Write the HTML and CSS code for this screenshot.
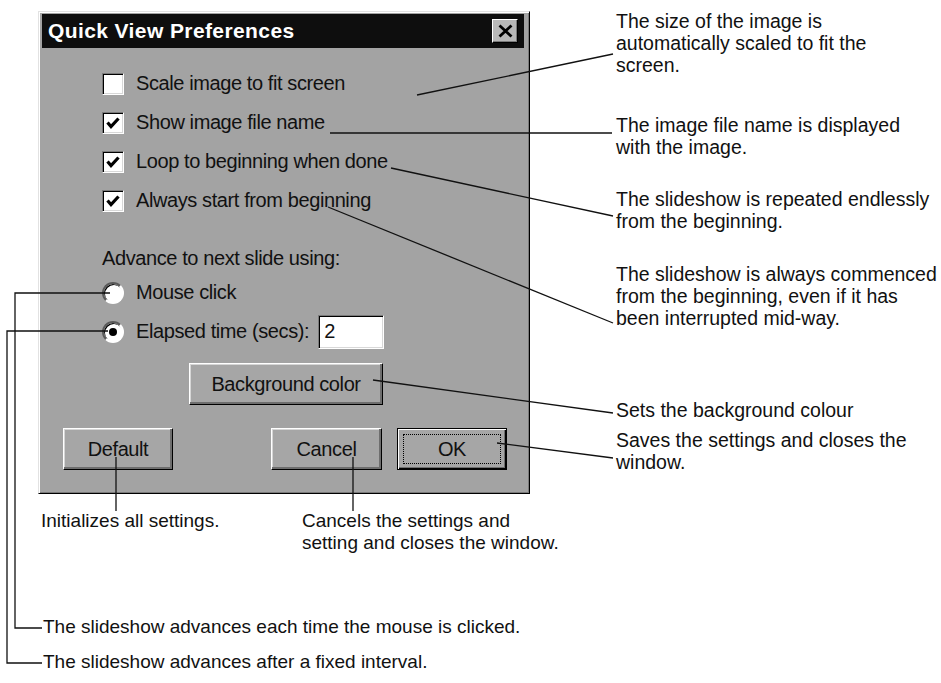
FILE: index.html
```html
<!DOCTYPE html>
<html>
<head>
<meta charset="utf-8">
<title>Quick View Preferences</title>
<link rel="stylesheet" href="styles.css">
</head>
<body>
<div class="page">
  <div class="dialog">
    <div class="titlebar">
      <span class="title">Quick View Preferences</span>
      <span class="close"><svg width="17" height="14" viewBox="0 0 17 14"><path d="M2.5 1.5 L14.5 12.5 M14.5 1.5 L2.5 12.5" stroke="#000" stroke-width="2.8" fill="none"/></svg></span>
    </div>
    <div class="body">
      <div class="options">
        <div class="opt"><span class="check"></span><span>Scale image to fit screen</span></div>
        <div class="opt"><span class="check"><svg width="16" height="16" viewBox="0 0 16 16"><path d="M2.5 7.5 L6 11.5 L13.5 3.5" stroke="#000" stroke-width="3.2" fill="none"/></svg></span><span>Show image file name</span></div>
        <div class="opt"><span class="check"><svg width="16" height="16" viewBox="0 0 16 16"><path d="M2.5 7.5 L6 11.5 L13.5 3.5" stroke="#000" stroke-width="3.2" fill="none"/></svg></span><span>Loop to beginning when done</span></div>
        <div class="opt"><span class="check"><svg width="16" height="16" viewBox="0 0 16 16"><path d="M2.5 7.5 L6 11.5 L13.5 3.5" stroke="#000" stroke-width="3.2" fill="none"/></svg></span><span>Always start from beginning</span></div>
      </div>
      <div class="group-label">Advance to next slide using:</div>
      <div class="radios">
        <div class="opt"><span class="radio"></span><span>Mouse click</span></div>
        <div class="opt"><span class="radio on"></span><span>Elapsed time (secs):</span><span class="field">2</span></div>
      </div>
      <div class="bg-row"><span class="btn bg">Background color</span></div>
      <div class="btn-row">
        <span class="btn default">Default</span>
        <span class="btn cancel">Cancel</span>
        <span class="btn ok"><span class="focus">OK</span></span>
      </div>
    </div>
  </div>

  <div class="note n-size">The size of the image is<br>automatically scaled to fit the<br>screen.</div>
  <div class="note n-name">The image file name is displayed<br>with the image.</div>
  <div class="note n-loop">The slideshow is repeated endlessly<br>from the beginning.</div>
  <div class="note n-always">The slideshow is always commenced<br>from the beginning, even if it has<br>been interrupted mid-way.</div>
  <div class="note n-bg">Sets the background colour</div>
  <div class="note n-ok">Saves the settings and closes the<br>window.</div>
  <div class="note small n-default">Initializes all settings.</div>
  <div class="note small n-cancel">Cancels the settings and<br>setting and closes the window.</div>
  <div class="note small n-mouse">The slideshow advances each time the mouse is clicked.</div>
  <div class="note small n-elapsed">The slideshow advances after a fixed interval.</div>

  <svg class="leaders" width="941" height="683" viewBox="0 0 941 683">
    <g stroke="#111" stroke-width="1.3" fill="none">
      <path d="M417 95 L613 54"/>
      <path d="M330 133 L612 133"/>
      <path d="M391 168 L613 216"/>
      <path d="M328 207 L613 323"/>
      <path d="M373 380 L613 413"/>
      <path d="M497 443 L613 458"/>
      <path d="M116 457 L116 511"/>
      <path d="M353 457 L353 511"/>
      <path d="M110 293 H15 V628 H42"/>
      <path d="M108 331 H7 V663 H42"/>
    </g>
  </svg>
</div>
</body>
</html>
```
FILE: styles.css
```css
html, body {
  margin: 0;
  padding: 0;
  background: #fff;
}

.page {
  position: relative;
  width: 941px;
  height: 683px;
  overflow: hidden;
  font-family: "Liberation Sans", Arial, sans-serif;
}

/* ---------- dialog ---------- */
.dialog {
  margin: 11px 0 0 38px;
  width: 492px;
  height: 483px;
  box-sizing: border-box;
  display: flex;
  flex-direction: column;
  background: #a3a3a3;
  border: 1px solid;
  border-color: #e2e2e2 #000 #000 #e2e2e2;
  box-shadow: inset 1px 1px #fff, inset -1px -1px #7a7a7a;
  padding: 2px 5px 4px 3px;
}

.titlebar {
  height: 34px;
  flex: none;
  background: #0e0e0e;
  display: flex;
  align-items: center;
  justify-content: space-between;
  padding: 0 6px 0 6px;
}

.title {
  color: #fff;
  font-weight: bold;
  font-size: 21px;
  letter-spacing: 0.4px;
}

.close {
  width: 26px;
  height: 24px;
  box-sizing: border-box;
  background: #b8b8b8;
  border: 1px solid;
  border-color: #fff #000 #000 #fff;
  box-shadow: inset -1px -1px #7a7a7a;
  display: flex;
  align-items: center;
  justify-content: center;
}

.body {
  flex: 1;
  display: flex;
  flex-direction: column;
  font-size: 20px;
  letter-spacing: -0.4px;
  color: #111;
}

.options {
  padding: 16px 0 0 60px;
  display: flex;
  flex-direction: column;
}

.opt {
  height: 39px;
  display: flex;
  align-items: center;
}

.check {
  width: 22px;
  height: 22px;
  box-sizing: border-box;
  flex: none;
  margin-right: 12px;
  background: #fff;
  border: 1px solid;
  border-color: #7a7a7a #fff #fff #7a7a7a;
  box-shadow: inset 1px 1px #000, inset -1px -1px #d8d8d8;
  display: flex;
  align-items: center;
  justify-content: center;
}

.group-label {
  margin: 26px 0 0 60px;
  height: 24px;
  line-height: 24px;
}

.radios {
  margin: 3px 0 0 60px;
  display: flex;
  flex-direction: column;
}

.radio {
  width: 22px;
  height: 22px;
  box-sizing: border-box;
  flex: none;
  margin-right: 12px;
  border-radius: 50%;
  background: #fff;
  border: 2px solid;
  border-color: #5a5a5a #fff #fff #5a5a5a;
  box-shadow: inset 1px 1px #000;
  display: flex;
  align-items: center;
  justify-content: center;
}

.radio.on::after {
  content: "";
  width: 8px;
  height: 8px;
  border-radius: 50%;
  background: #000;
}

.field {
  margin-left: 9px;
  width: 66px;
  height: 34px;
  box-sizing: border-box;
  background: #fff;
  border: 1px solid;
  border-color: #7a7a7a #fff #fff #7a7a7a;
  box-shadow: inset 1px 1px #000, inset -1px -1px #d8d8d8;
  display: flex;
  align-items: center;
  padding-left: 5px;
}

.btn {
  height: 42px;
  box-sizing: border-box;
  display: flex;
  align-items: center;
  justify-content: center;
  background: #a6a6a6;
  border: 1px solid;
  border-color: #fff #000 #000 #fff;
  box-shadow: inset -2px -2px #6e6e6e, inset 1px 1px #d6d6d6;
  color: #111;
}

.bg-row {
  margin: 12px 0 0 147px;
  display: flex;
}

.bg {
  width: 194px;
}

.btn-row {
  margin: 23px 0 0 21px;
  display: flex;
}

.default {
  width: 110px;
}

.cancel {
  width: 111px;
  margin-left: 98px;
}

.ok {
  width: 110px;
  margin-left: 15px;
  border: 1px solid #000;
  box-shadow: inset 1px 1px #fff, inset -1px -1px #000, inset -2px -2px #6e6e6e;
  padding: 5px;
}

.focus {
  flex: 1;
  align-self: stretch;
  border: 1px dotted #000;
  display: flex;
  align-items: center;
  justify-content: center;
}

/* ---------- annotations ---------- */
.note {
  position: absolute;
  font-size: 19.5px;
  line-height: 22px;
  color: #111;
  white-space: nowrap;
}

.note.small {
  font-size: 19px;
}

.n-size { left: 616px; top: 10px; }
.n-name { left: 616px; top: 114px; }
.n-loop { left: 616px; top: 188px; }
.n-always { left: 616px; top: 263px; }
.n-bg { left: 616px; top: 399px; }
.n-ok { left: 616px; top: 429px; }
.n-default { left: 41px; top: 510px; }
.n-cancel { left: 302px; top: 510px; }
.n-mouse { left: 43px; top: 616px; }
.n-elapsed { left: 43px; top: 651px; }

.leaders {
  position: absolute;
  left: 0;
  top: 0;
  pointer-events: none;
}
```
